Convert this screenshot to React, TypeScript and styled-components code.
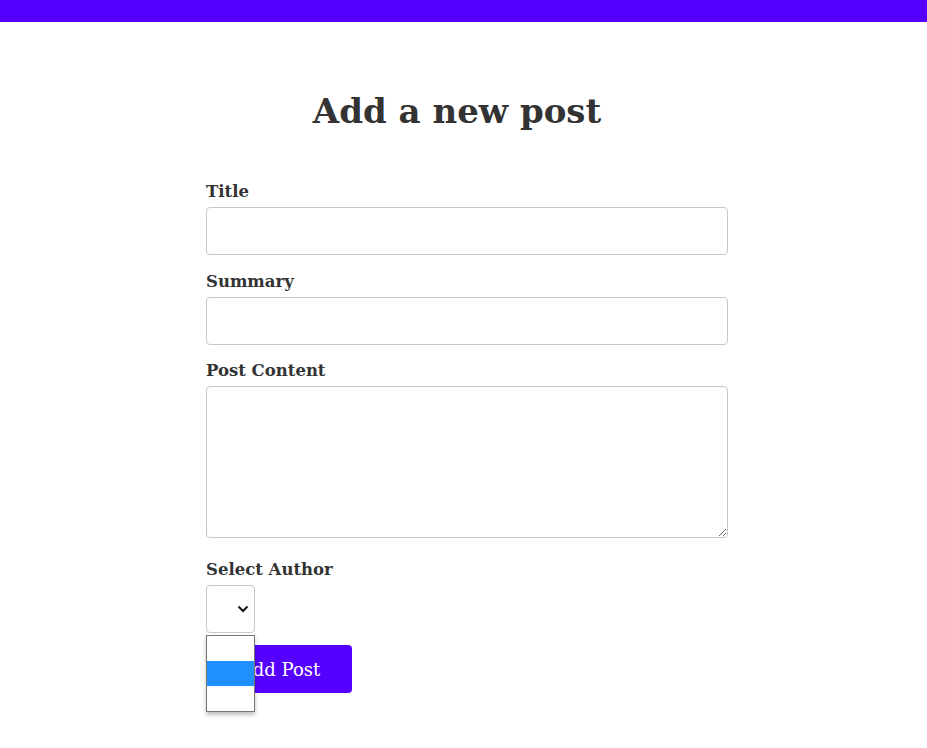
import React from "react";
import styled, { createGlobalStyle } from "styled-components";

const Global = createGlobalStyle`
  html, body { margin: 0; padding: 0; background: #fff; }
  body { font-family: "DejaVu Serif", "Liberation Serif", serif; color: #333; }
  * { box-sizing: border-box; }
`;

const TopBar = styled.header`
  height: 22px;
  background: #5500ff;
`;

const Main = styled.main`
  display: flex;
  flex-direction: column;
  align-items: center;
  padding: 67px 0 40px 7px;
`;

const Heading = styled.h1`
  margin: 0 20px 45px 0;
  font-size: 34px;
  line-height: 44px;
  font-weight: 700;
  color: #333;
`;

const Form = styled.form`
  width: 522px;
  display: flex;
  flex-direction: column;
`;

const Field = styled.div<{ $mb?: number }>`
  display: flex;
  flex-direction: column;
  margin-bottom: ${(p) => (p.$mb ?? 13)}px;
`;

const Label = styled.label`
  font-size: 16.5px;
  font-weight: 700;
  line-height: 27px;
  margin-bottom: 2px;
  color: #333;
`;

const TextInput = styled.input`
  height: 48px;
  border: 1px solid #c8c8c8;
  border-radius: 4px;
  background: #fff;
  font: inherit;
`;

const TextArea = styled.textarea`
  height: 152px;
  margin-bottom: 5px;
  border: 1px solid #c8c8c8;
  border-radius: 4px;
  background: #fff;
  font: inherit;
  resize: vertical;
`;

const SelectWrap = styled.div`
  position: relative;
  width: 48px;
`;

const SelectBox = styled.div`
  width: 49px;
  height: 48px;
  border: 1px solid #c8c8c8;
  border-radius: 4px;
  background: #fff;
  display: flex;
  align-items: center;
  justify-content: flex-end;
  padding-right: 5px;
`;

const Dropdown = styled.ul`
  position: absolute;
  top: 50px;
  left: 0;
  width: 49px;
  margin: 0;
  padding: 0;
  list-style: none;
  background: #fff;
  border: 1px solid #767676;
  box-shadow: 0 3px 4px rgba(0, 0, 0, 0.25);
  z-index: 2;
`;

const Option = styled.li<{ $active?: boolean }>`
  height: 25px;
  background: ${(p) => (p.$active ? "#1e90ff" : "#fff")};
`;

const Button = styled.button`
  align-self: flex-start;
  width: 146px;
  height: 48px;
  border: none;
  border-radius: 4px;
  background: #5500ff;
  color: #fff;
  font-family: "DejaVu Serif", "Liberation Serif", serif;
  font-size: 18px;
  padding-left: 8px;
`;

const Chevron = () => (
  <svg width="12" height="8" viewBox="0 0 12 8">
    <path d="M1.5 1.5 L6 6 L10.5 1.5" fill="none" stroke="#111" strokeWidth="2" />
  </svg>
);

export default function App() {
  return (
    <>
      <Global />
      <TopBar />
      <Main>
        <Heading>Add a new post</Heading>
        <Form onSubmit={(e) => e.preventDefault()}>
          <Field>
            <Label htmlFor="title">Title</Label>
            <TextInput id="title" type="text" />
          </Field>
          <Field $mb={12}>
            <Label htmlFor="summary">Summary</Label>
            <TextInput id="summary" type="text" />
          </Field>
          <Field>
            <Label htmlFor="content">Post Content</Label>
            <TextArea id="content" />
          </Field>
          <Field $mb={12}>
            <Label>Select Author</Label>
            <SelectWrap>
              <SelectBox>
                <Chevron />
              </SelectBox>
              <Dropdown>
                <Option />
                <Option $active />
                <Option />
              </Dropdown>
            </SelectWrap>
          </Field>
          <Button type="submit">Add Post</Button>
        </Form>
      </Main>
    </>
  );
}
